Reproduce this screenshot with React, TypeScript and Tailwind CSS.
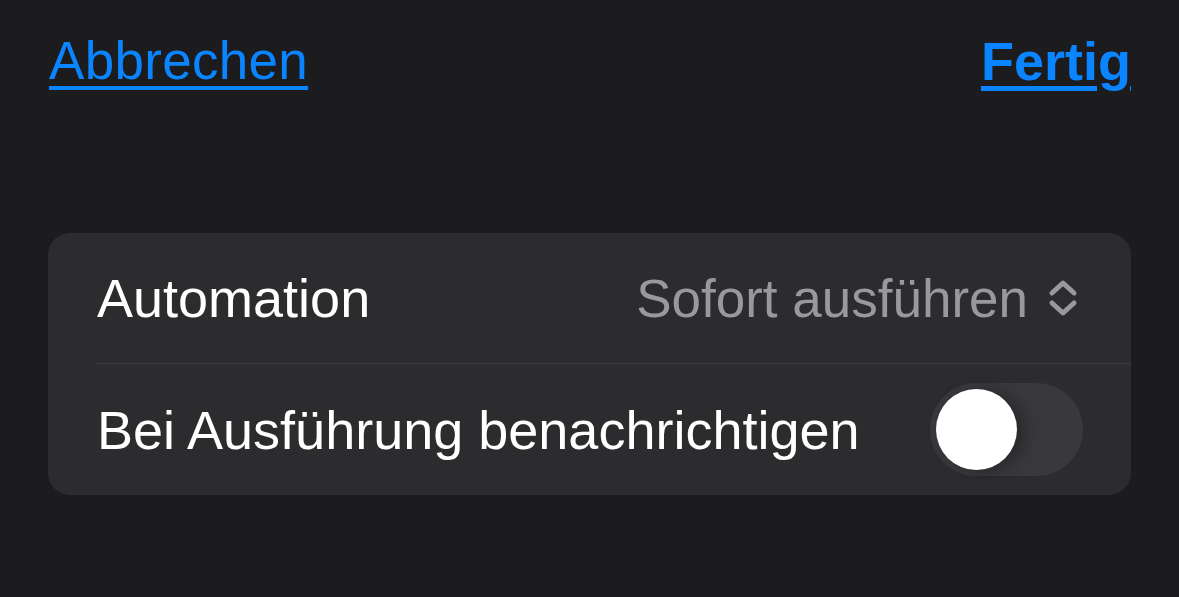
import { useState } from "react";

const ChevronUpDown = () => (
  <svg width="32" height="38" viewBox="0 0 32 38" fill="none" stroke="#98989e" strokeWidth="5" strokeLinecap="round" strokeLinejoin="round">
    <path d="M5 14 L16 4 L27 14" />
    <path d="M5 24 L16 34 L27 24" />
  </svg>
);

const Toggle = ({ on, onChange }: { on: boolean; onChange: (v: boolean) => void }) => (
  <button
    onClick={() => onChange(!on)}
    className={`relative h-[93px] w-[153px] rounded-full ${on ? "bg-[#30d158]" : "bg-[#39393d]"}`}
  >
    <span
      className={`absolute top-[6px] h-[81px] w-[81px] rounded-full bg-white shadow-[8px_2px_16px_rgba(0,0,0,0.3)] ${
        on ? "left-[66px]" : "left-[6px]"
      }`}
    />
  </button>
);

export default function App() {
  const [notify, setNotify] = useState(false);

  return (
    <div className="h-[597px] w-full bg-[#1c1c1e] font-['Liberation_Sans',Arial,sans-serif]">
      {/* Header */}
      <div className="flex items-start justify-between pl-[49px] pr-[48px] pt-[34px] h-[233px]">
        <a className="text-[53px] leading-none text-[#0a84ff] underline decoration-[4px] underline-offset-[7px] tracking-[0.3px]">
          Abbrechen
        </a>
        <a className="text-[54px] font-bold leading-none text-[#0a84ff] underline decoration-[5px] underline-offset-[6px]">
          Fertig
        </a>
      </div>

      {/* Settings card */}
      <div className="mx-[48px] overflow-hidden rounded-[22px] bg-[#2c2c2e]">
        <div className="flex h-[130px] items-center justify-between pl-[49px] pr-[52px]">
          <span className="text-[54px] leading-none text-white">Automation</span>
          <div className="flex items-center gap-[19px]">
            <span className="text-[53px] leading-none text-[#98989e]">Sofort ausführen</span>
            <ChevronUpDown />
          </div>
        </div>
        <div className="ml-[48px] h-px bg-[#3d3d41]" />
        <div className="flex h-[131px] items-center justify-between pl-[49px] pr-[48px]">
          <span className="text-[54px] leading-none text-white">Bei Ausführung benachrichtigen</span>
          <Toggle on={notify} onChange={setNotify} />
        </div>
      </div>
    </div>
  );
}
